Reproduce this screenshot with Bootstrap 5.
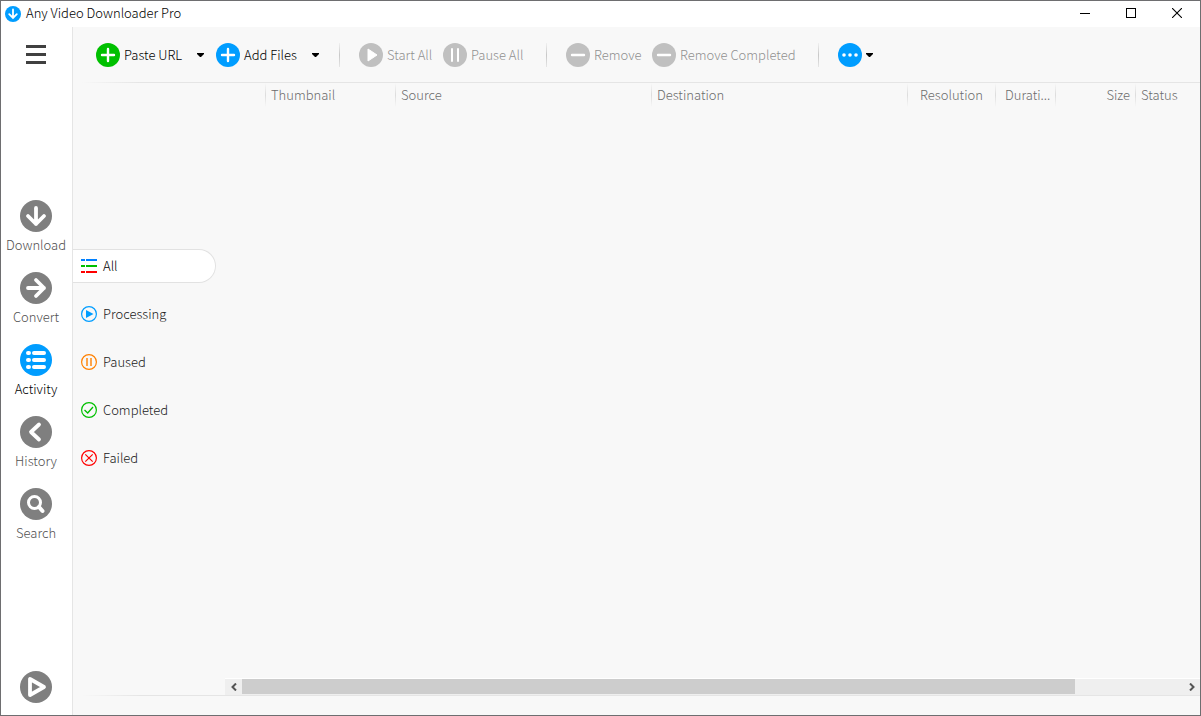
<!DOCTYPE html>
<html lang="en">
<head>
<meta charset="utf-8">
<meta name="viewport" content="width=device-width, initial-scale=1">
<title>Any Video Downloader Pro</title>
<link href="https://cdn.jsdelivr.net/npm/bootstrap@5.3.0/dist/css/bootstrap.min.css" rel="stylesheet">
<style>
body{font-family:"Noto Sans CJK SC","Noto Sans",sans-serif;font-size:13px;font-weight:300;line-height:18px;color:#000;background:#f8f8f8}
svg{display:block;flex:none}
.app-window{border:1px solid #6e6e70}
.titlebar{height:26px;padding-left:4px}
.titlebar h1{font-size:13px;line-height:18px;font-weight:300;padding:0 0 2px 5px}
.btn{--bs-btn-font-size:13px;--bs-btn-font-weight:300;--bs-btn-line-height:18px;--bs-btn-border-width:0;--bs-btn-padding-x:0;--bs-btn-padding-y:0;--bs-btn-border-radius:0;--bs-btn-color:#000}
.win-btn{width:46px;height:26px;padding-bottom:2px;display:flex;align-items:center;justify-content:center}
.sidebar{width:72px;padding-right:1px;border-right:1px solid #e5e5e5}
.side-end{flex:1 1 0}
.menu-btn{padding:17px 0}
.play-btn{margin-bottom:12px}
.side-link{height:72px;padding:9px 0 0;gap:4px;color:#505050}
.side-link.active{color:#000}
.toolbar{height:55px;padding-left:23px}
.tool-btn{gap:4px;height:24px;white-space:nowrap}
.tool-btn:disabled{opacity:1;color:#909090}
.w-split{width:88px}
.w-start{width:84px}
.w-pause{width:81px}
.w-add{width:83px}
.w-remove{width:86px}
.w-done{width:144px}
.caret-btn{width:32px;height:24px;display:flex;align-items:center;justify-content:center}
.tool-sep{width:1px;height:24px;margin:0 19px 0 22px;background:linear-gradient(#f0f0f0,#c8c8c8 50%,#e6e6e6)}
.sep-first{margin-left:8px}
.fade-line{height:1px;margin-left:8px;background:linear-gradient(90deg,#f8f8f8,#e5e5e5 60px)}
.filters{width:152px;padding-bottom:54px}
.filter-row{height:48px}
.filter-link{height:34px;width:143px;padding-left:8px;gap:6px;color:#202020;text-decoration:none;border:1px solid transparent;border-left:0}
.filter-link.active{color:#000;background:#fff;border-color:#e2e2e2;border-radius:0 17px 17px 0}
.task-table{table-layout:fixed;width:100%;min-width:975px}
.task-table th{height:24px;padding:0 6px 0 5px;font-weight:300;color:#6c6c6c;background:linear-gradient(#f8f8f8,#dcdcdc 50%,#f8f8f8) right/1px 100% no-repeat;white-space:nowrap}
.task-table th:last-child{background:none}
.c-check{width:41px}.c-thumb{width:130px}.c-file{width:256px}.c-res{width:88px}.c-dur{width:60px}.c-size{width:80px}
.task-table .th-dur{padding-left:9px}
.hscroll{height:17px;border-top:1px solid #fff;background:#efefef}
.hscroll button{width:17px}
.hthumb{height:15px;background:#cdcdcd}
.statusbar{height:19px}
</style>
</head>
<body>
<div class="app-window vh-100 d-flex flex-column overflow-hidden">
  <header class="titlebar bg-white d-flex align-items-center flex-shrink-0">
    <svg width="16" height="16" viewBox="0 0 16 16"><circle cx="8" cy="8" r="8" fill="#009dff"/><path d="M8 3.500v8M4.200 8.200 8 12l3.800-3.800" fill="none" stroke="#fff" stroke-width="1.800" stroke-linecap="round"/></svg>
    <h1 class="m-0 me-auto">Any Video Downloader Pro</h1>
    <button class="btn win-btn" aria-label="Minimize"><svg width="10" height="10" shape-rendering="crispEdges"><path d="M0 5h10v1H0z"/></svg></button>
    <button class="btn win-btn" aria-label="Maximize"><svg width="10" height="10" shape-rendering="crispEdges"><path d="M.5.5h9v9h-9z" fill="none" stroke="#000"/></svg></button>
    <button class="btn win-btn" aria-label="Close"><svg width="10" height="10"><path d="m0 0 10 10M10 0 0 10" fill="none" stroke="#000" stroke-width="1.100"/></svg></button>
  </header>

  <div class="d-flex flex-grow-1 overflow-hidden">
    <nav class="sidebar bg-white d-flex flex-column flex-shrink-0 align-items-stretch">
      <div class="side-end">
        <button class="btn menu-btn w-100 d-flex justify-content-center" aria-label="Menu"><svg width="20" height="21"><path d="M0 2.500h20M0 10.500h20M0 18.500h20" stroke="#404040" stroke-width="3.200"/></svg></button>
      </div>
      <a href="#" class="side-link nav-link d-flex flex-column align-items-center">
        <svg width="32" height="32" viewBox="0 0 32 32"><circle cx="16" cy="16" r="16" fill="#7f7f7f"/><path d="M16 8v16M8 16l8 8 8-8" fill="none" stroke="#fff" stroke-width="3.800" stroke-linecap="round" stroke-linejoin="round"/></svg>
        Download</a>
      <a href="#" class="side-link nav-link d-flex flex-column align-items-center">
        <svg width="32" height="32" viewBox="0 0 32 32"><circle cx="16" cy="16" r="16" fill="#7f7f7f"/><path d="M8 16h16M16 8l8 8-8 8" fill="none" stroke="#fff" stroke-width="3.800" stroke-linecap="round" stroke-linejoin="round"/></svg>
        Convert</a>
      <a href="#" class="side-link nav-link active d-flex flex-column align-items-center">
        <svg width="32" height="32" viewBox="0 0 32 32"><circle cx="16" cy="16" r="16" fill="#009dff"/><g stroke="#fff" stroke-width="4" stroke-linecap="round"><path d="M8 9h1M8 16h1M8 23h1M14 9h10M14 16h10M14 23h10"/></g></svg>
        Activity</a>
      <a href="#" class="side-link nav-link d-flex flex-column align-items-center">
        <svg width="32" height="32" viewBox="0 0 32 32"><circle cx="16" cy="16" r="16" fill="#7f7f7f"/><path d="m19 8.500-8 7.500 8 7.500" fill="none" stroke="#fff" stroke-width="3.800" stroke-linecap="round" stroke-linejoin="round"/></svg>
        History</a>
      <a href="#" class="side-link nav-link d-flex flex-column align-items-center">
        <svg width="32" height="32" viewBox="0 0 32 32"><circle cx="16" cy="16" r="16" fill="#7f7f7f"/><circle cx="14.500" cy="14.500" r="6" fill="none" stroke="#fff" stroke-width="3"/><path d="m19 19 3.500 4" stroke="#fff" stroke-width="4" stroke-linecap="round"/></svg>
        Search</a>
      <div class="side-end d-flex flex-column justify-content-end">
        <button class="btn play-btn d-flex justify-content-center" aria-label="Player"><svg width="32" height="32" viewBox="0 0 32 32"><circle cx="16" cy="16" r="16" fill="#7f7f7f"/><path d="M10 8v16l14-8z" fill="none" stroke="#fff" stroke-width="3.800" stroke-linejoin="round"/></svg></button>
      </div>
    </nav>

    <main class="d-flex flex-column flex-grow-1 overflow-hidden">
      <div class="toolbar d-flex align-items-center flex-shrink-0" role="toolbar" aria-label="Tasks">
        <button class="btn tool-btn w-split d-flex align-items-center"><svg width="24" height="24"><circle cx="12" cy="12" r="12" fill="#00c000"/><path d="M6 12h12M12 6v12" stroke="#fff" stroke-width="2.400" stroke-linecap="round"/></svg>Paste URL</button>
        <button class="btn caret-btn" aria-label="Paste URL options"><svg width="7" height="4"><path d="M0 0h7v1L4 4H3L0 1z"/></svg></button>
        <button class="btn tool-btn w-add d-flex align-items-center"><svg width="24" height="24"><circle cx="12" cy="12" r="12" fill="#009dff"/><path d="M6 12h12M12 6v12" stroke="#fff" stroke-width="2.400" stroke-linecap="round"/></svg>Add Files</button>
        <button class="btn caret-btn" aria-label="Add Files options"><svg width="7" height="4"><path d="M0 0h7v1L4 4H3L0 1z"/></svg></button>
        <div class="tool-sep sep-first"></div>
        <button class="btn tool-btn w-start d-flex align-items-center" disabled><svg width="24" height="24"><circle cx="12" cy="12" r="12" fill="#c0c0c0"/><path d="M9 6v12l9-6z" fill="#fff" stroke="#fff" stroke-linejoin="round"/></svg>Start All</button>
        <button class="btn tool-btn w-pause d-flex align-items-center" disabled><svg width="24" height="24"><circle cx="12" cy="12" r="12" fill="#c0c0c0"/><path d="M9 6v12M15 6v12" stroke="#fff" stroke-width="2" stroke-linecap="round"/></svg>Pause All</button>
        <div class="tool-sep"></div>
        <button class="btn tool-btn w-remove d-flex align-items-center" disabled><svg width="24" height="24"><circle cx="12" cy="12" r="12" fill="#c0c0c0"/><path d="M6 12h12" stroke="#fff" stroke-width="2.400" stroke-linecap="round"/></svg>Remove</button>
        <button class="btn tool-btn w-done d-flex align-items-center" disabled><svg width="24" height="24"><circle cx="12" cy="12" r="12" fill="#c0c0c0"/><path d="M6 12h12" stroke="#fff" stroke-width="2.400" stroke-linecap="round"/></svg>Remove Completed</button>
        <div class="tool-sep"></div>
        <button class="btn tool-btn d-flex align-items-center" aria-label="More"><svg width="24" height="24"><circle cx="12" cy="12" r="12" fill="#009dff"/><g fill="#fff"><circle cx="6" cy="12" r="1.800"/><circle cx="12" cy="12" r="1.800"/><circle cx="18" cy="12" r="1.800"/></g></svg><svg width="7" height="4"><path d="M0 0h7v1L4 4H3L0 1z"/></svg></button>
      </div>
      <div class="fade-line flex-shrink-0"></div>

      <div class="d-flex flex-grow-1 overflow-hidden">
        <nav class="filters d-flex flex-column justify-content-center flex-shrink-0" aria-label="Filter">
          <div class="filter-row d-flex align-items-center"><a href="#" class="filter-link active d-flex align-items-center"><svg width="16" height="16"><g stroke-width="2"><path d="M0 2h4M5 2h11" stroke="#0080ff"/><path d="M0 8h4M5 8h11" stroke="#00c000"/><path d="M0 14h4M5 14h11" stroke="#f00"/></g></svg>All</a></div>
          <div class="filter-row d-flex align-items-center"><a href="#" class="filter-link d-flex align-items-center"><svg width="16" height="16"><circle cx="8" cy="8" r="7.400" fill="none" stroke="#009dff" stroke-width="1.200"/><path d="M5 4v8l7.500-4z" fill="#009dff"/></svg>Processing</a></div>
          <div class="filter-row d-flex align-items-center"><a href="#" class="filter-link d-flex align-items-center"><svg width="16" height="16"><circle cx="8" cy="8" r="7.400" fill="none" stroke="#ff8000" stroke-width="1.200"/><path d="M6 4v8M10 4v8" stroke="#ff8000" stroke-width="1.400"/></svg>Paused</a></div>
          <div class="filter-row d-flex align-items-center"><a href="#" class="filter-link d-flex align-items-center"><svg width="16" height="16"><circle cx="8" cy="8" r="7.400" fill="none" stroke="#00c000" stroke-width="1.200"/><path d="m3.500 8 3.200 3 5.300-6" fill="none" stroke="#00c000" stroke-width="1.300"/></svg>Completed</a></div>
          <div class="filter-row d-flex align-items-center"><a href="#" class="filter-link d-flex align-items-center"><svg width="16" height="16"><circle cx="8" cy="8" r="7.400" fill="none" stroke="#f00" stroke-width="1.200"/><path d="m4.300 4.300 7.400 7.400m0-7.400-7.400 7.400" stroke="#f00" stroke-width="1.200"/></svg>Failed</a></div>
        </nav>
        <section class="d-flex flex-column flex-grow-1 overflow-hidden">
          <div class="flex-grow-1 overflow-hidden">
            <table class="task-table">
              <colgroup><col class="c-check"><col class="c-thumb"><col class="c-file"><col class="c-file"><col class="c-res"><col class="c-dur"><col class="c-size"><col></colgroup>
              <thead><tr><th></th><th scope="col">Thumbnail</th><th scope="col">Source</th><th scope="col">Destination</th><th scope="col" class="text-center">Resolution</th><th scope="col" class="th-dur" title="Duration">Durati...</th><th scope="col" class="text-end">Size</th><th scope="col">Status</th></tr></thead>
            </table>
          </div>
          <div class="hscroll d-flex flex-shrink-0">
            <button class="btn d-flex align-items-center justify-content-center" aria-label="Scroll left"><svg width="6" height="8"><path d="M5 .5 1.500 4 5 7.500" fill="none" stroke="#555" stroke-width="2"/></svg></button>
            <div class="flex-grow-1"><div class="hthumb" style="width:88.5%"></div></div>
            <button class="btn d-flex align-items-center justify-content-center" aria-label="Scroll right"><svg width="6" height="8"><path d="M1 .5 4.500 4 1 7.500" fill="none" stroke="#555" stroke-width="2"/></svg></button>
          </div>
        </section>
      </div>
      <div class="fade-line flex-shrink-0"></div>
      <footer class="statusbar flex-shrink-0"></footer>
    </main>
  </div>
</div>
<script src="https://cdn.jsdelivr.net/npm/bootstrap@5.3.0/dist/js/bootstrap.bundle.min.js"></script>
</body>
</html>
